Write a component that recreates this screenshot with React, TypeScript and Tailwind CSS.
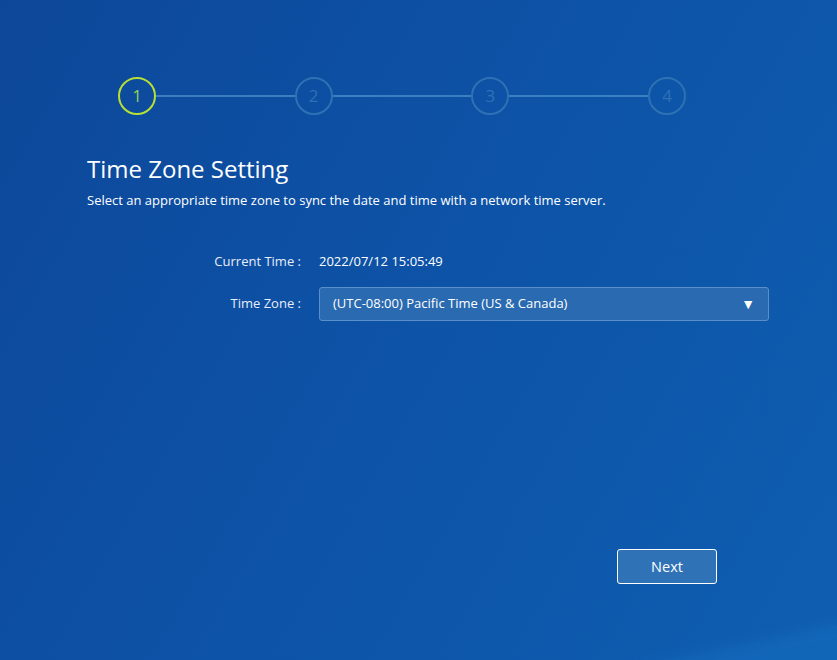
const steps = [1, 2, 3, 4];

function Stepper({ current }: { current: number }) {
  return (
    <div className="flex items-center w-[568px] ml-[118px]">
      {steps.map((n, i) => (
        <div key={n} className="flex items-center flex-1 last:flex-none">
          <div
            className={
              n === current
                ? 'w-[38px] h-[38px] rounded-full border-2 border-[#b6e035] flex items-center justify-center text-[17px] text-[#8fd45a] shrink-0'
                : 'w-[38px] h-[38px] rounded-full border-2 border-[#2e72b4] flex items-center justify-center text-[17px] text-[#2e72b4] shrink-0'
            }
          >
            {n}
          </div>
          {i < steps.length - 1 && <div className="h-[2px] flex-1 bg-[#3a7fc0]" />}
        </div>
      ))}
    </div>
  );
}

export default function App() {
  return (
    <div
      className="w-[837px] h-[660px] overflow-hidden relative text-white bg-[linear-gradient(120deg,#0d4799_0%,#0d52a6_45%,#0e5eb1_100%)]"
      style={{ fontFamily: '"Open Sans", "Noto Sans", sans-serif' }}
    >
      {/* faint wave in the corner */}
      <div className="absolute right-[-80px] bottom-[-40px] w-[300px] h-[60px] rounded-full bg-[#1a74c4]/40 rotate-[-12deg] blur-[6px]" />

      <div className="relative pt-[77px]">
        <Stepper current={1} />

        <div className="pl-[87px] mt-[38px]">
          <h1 className="text-[24px] leading-[32px]">Time Zone Setting</h1>
          <p className="text-[13px] leading-[18px] mt-[6px]">
            Select an appropriate time zone to sync the date and time with a network time server.
          </p>
        </div>

        <div className="mt-[43px] grid grid-cols-[302px_450px] gap-y-[15px] items-center text-[13px]">
          <div className="text-right pr-[1px] text-[#e8eef8]">Current Time :</div>
          <div className="pl-[17px]">2022/07/12 15:05:49</div>

          <div className="text-right pr-[1px] text-[#e8eef8]">Time Zone :</div>
          <div className="pl-[17px]">
            <div className="h-[34px] w-[450px] rounded-[3px] border border-[#5b8fc9] bg-[#2a6ab0] flex items-center justify-between pl-[13px] pr-[13px]">
              <span>(UTC-08:00) Pacific Time (US &amp; Canada)</span>
              <span className="text-[14px] leading-none">▼</span>
            </div>
          </div>
        </div>
      </div>

      <button className="absolute left-[617px] top-[549px] w-[100px] h-[35px] rounded-[3px] border border-white bg-[#2f72b6] text-[14.5px] text-white">
        Next
      </button>
    </div>
  );
}
